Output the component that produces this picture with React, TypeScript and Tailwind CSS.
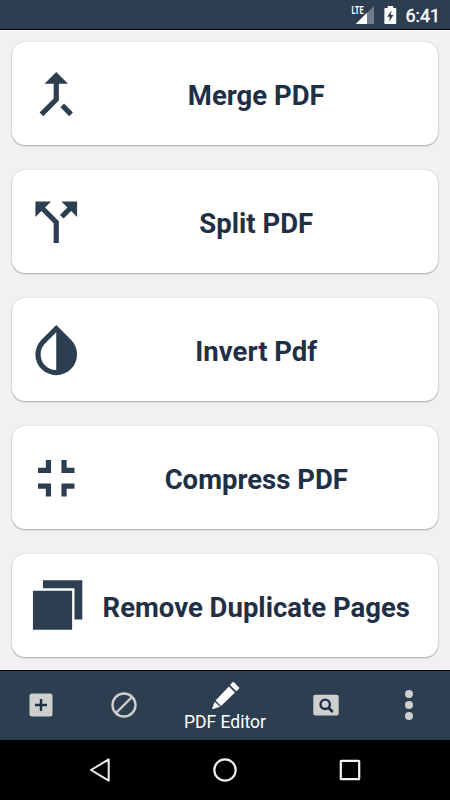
import type { ReactNode } from "react";

function ToolCard({ label, children }: { label: string; children: ReactNode }) {
  return (
    <button className="flex h-[103px] w-full shrink-0 items-center rounded-[13px] bg-white px-[13px] shadow-[0_1px_2px_rgba(0,0,0,0.28),0_0_1.5px_rgba(0,0,0,0.15)]">
      <svg className="mt-px size-[62.5px] shrink-0 fill-[#2c3e50]" viewBox="0 0 24 24">
        {children}
      </svg>
      <span className="flex-1 pt-[4.5px] text-center text-[27.5px] leading-8 font-bold whitespace-nowrap text-[#1f2f46]">
        {label}
      </span>
    </button>
  );
}

function StatusBar() {
  return (
    <header className="flex h-[30px] shrink-0 border-b border-black bg-[#2c3e50] pl-[350px]">
      <svg className="h-[29px] w-[54px]" viewBox="350 0 54 29">
        <path d="M374 6V24H356Z" fill="#6f7b88" />
        <path d="M367 13V24H356Z" fill="#fff" />
        <rect x="350" y="4" width="15" height="11" fill="#2c3e50" />
        <path d="M365 15L367 13V24H356Z" fill="#fff" />
        <text x="351.6" y="13.7" fontSize="10.5" fontWeight="700" fill="#fff" textLength="12" lengthAdjust="spacingAndGlyphs">LTE</text>
        <path d="M387.7 6H393.2V8H395.4Q396.2 8 396.2 8.8V23.2Q396.2 24 395.4 24H385.2Q384.4 24 384.4 23.2V8.8Q384.4 8 385.2 8H387.7Z" fill="#fff" />
        <path d="M391.6 10.4L387.2 16.8H389.8L389.2 21.6L393.5 15H390.8Z" fill="#2c3e50" />
      </svg>
      <span className="pt-[4px] pl-[1.5px] text-[18px] leading-6 font-normal text-white [-webkit-text-stroke:0.4px_white]">6:41</span>
    </header>
  );
}

function NavBar() {
  return (
    <nav className="flex h-[70px] shrink-0 border-t border-black bg-[#2c3e50] text-[#cfcfcf]">
      <button className="flex w-[82.4px] items-center justify-center pb-px">
        <svg className="size-6" viewBox="0 0 24 24">
          <rect x=".5" y=".5" width="23" height="23" rx="2.5" fill="currentColor" />
          <path d="M12 6V18M6 12H18" stroke="#1f3148" strokeWidth="2.4" />
        </svg>
      </button>
      <button className="flex w-[82.4px] items-center justify-center pb-px">
        <svg className="size-[26px] fill-none stroke-current stroke-[2.4]" viewBox="0 0 26 26">
          <circle cx="13" cy="13" r="11.5" />
          <path d="M5 21L21 5" />
        </svg>
      </button>
      <button className="flex w-[120.4px] flex-col items-center pt-[10px] text-white">
        <svg className="size-[30px] shrink-0 fill-white" viewBox="-1 0 30 30">
          <path d="M19 4L21.3 1.6Q22.3.6 23.3 1.6L27.8 6.2Q28.7 7.2 27.8 8.1L25.3 10.3Z" />
          <path d="M17.9 5.4L24 11.6L10 24.9L4.6 19.6Z" />
          <path d="M3.7 20.8L9 25.8L2.3 28Q.8 28.4 1.3 26.9Z" />
        </svg>
        <span className="mt-px text-[17.5px] leading-5 whitespace-nowrap">PDF Editor</span>
      </button>
      <button className="flex w-[82.4px] items-center justify-center pb-px">
        <svg className="h-[22px] w-[26px]" viewBox="0 0 26 22">
          <rect x=".3" y=".7" width="25.4" height="20.8" rx="2" fill="currentColor" />
          <g fill="none" stroke="#1f3148" strokeWidth="2.4">
            <circle cx="12.2" cy="10.3" r="4.7" />
            <path d="M15.5 13.7L19.8 18" strokeWidth="2.7" />
          </g>
        </svg>
      </button>
      <button className="flex w-[82.4px] flex-col items-center justify-center gap-[3.3px] pb-px">
        <i className="size-2 rounded-full bg-current" />
        <i className="size-2 rounded-full bg-current" />
        <i className="size-2 rounded-full bg-current" />
      </button>
    </nav>
  );
}

function SystemBar() {
  return (
    <footer className="flex h-[60px] shrink-0 items-center justify-between bg-black px-[88px]">
      <svg className="size-6 fill-none stroke-[#eee] stroke-[2]" viewBox="0 0 24 24">
        <path d="M20.7 1.4V22.6L3 12Z" strokeLinejoin="round" />
      </svg>
      <svg className="size-6 fill-none stroke-[#eee] stroke-[2.2]" viewBox="0 0 24 24">
        <circle cx="12" cy="12" r="10.7" />
      </svg>
      <svg className="size-6 fill-none stroke-[#f4f4f4] stroke-[2.2]" viewBox="0 0 24 24">
        <rect x="2.8" y="2.8" width="18.4" height="18.4" rx=".5" />
      </svg>
    </footer>
  );
}

export default function App() {
  return (
    <div className="flex h-[800px] w-[450px] flex-col overflow-hidden bg-[#f1f1f1] font-['Roboto',sans-serif]">
      <StatusBar />
      <main className="flex min-h-0 flex-1 flex-col gap-[25px] overflow-hidden border-t border-white px-3 pt-[11px]">
        <ToolCard label="Merge PDF">
          <path d="M17 20.41L18.41 19 15 15.59 13.59 17 17 20.41zM7.5 8H11v5.59L5.59 19 7 20.41l6-6V8h3.5L12 3.5 7.5 8z" />
        </ToolCard>
        <ToolCard label="Split PDF">
          <path d="M14 4l2.29 2.29-2.88 2.88 1.42 1.42 2.88-2.88L20 10V4zm-4 0H4v6l2.29-2.29 4.71 4.7V20h2v-8.41l-5.29-5.3z" />
        </ToolCard>
        <ToolCard label="Invert Pdf">
          <path d="M17.66 7.93L12 2.27 6.34 7.93c-3.12 3.12-3.12 8.19 0 11.31C7.9 20.8 9.95 21.58 12 21.58c2.05 0 4.1-.78 5.66-2.34 3.12-3.12 3.12-8.19 0-11.31zM12 19.59c-1.6 0-3.11-.62-4.24-1.76C6.62 16.69 6 15.19 6 13.59s.62-3.11 1.76-4.24L12 5.1v14.49z" />
        </ToolCard>
        <ToolCard label="Compress PDF">
          <path d="M5 16h3v3h2v-5H5v2zm3-8H5v2h5V5H8v3zm6 11h2v-3h3v-2h-5v5zm2-11V5h-2v5h5V8h-3z" />
        </ToolCard>
        <ToolCard label="Remove Duplicate Pages">
          <path d="M3.05 6H18.1V21H3.05zM6.9 2.05H22V17.1H19V5.1H6.9z" />
        </ToolCard>
      </main>
      <NavBar />
      <SystemBar />
    </div>
  );
}
